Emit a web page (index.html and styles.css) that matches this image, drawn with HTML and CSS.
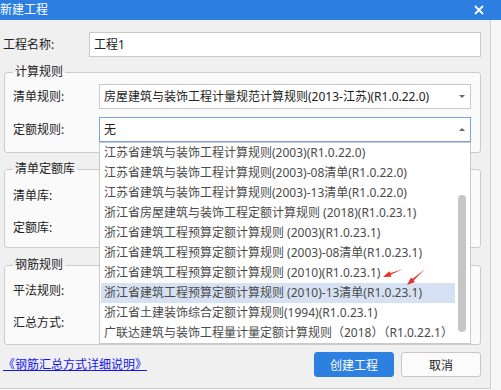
FILE: index.html
```html
<!DOCTYPE html>
<html lang="zh-CN">
<head>
  <meta charset="UTF-8">
  <title>新建工程</title>
  <link rel="stylesheet" href="styles.css">
</head>
<body>
  <div class="titlebar">
    <span class="title">新建工程</span>
    <svg class="close" width="10" height="10" viewBox="0 0 10 10">
      <path d="M1 1 L9 9 M9 1 L1 9" stroke="#fff" stroke-width="1.8" fill="none"/>
    </svg>
  </div>

  <div class="dialog">
    <div class="name-row">
      <span class="label">工程名称:</span>
      <div class="input">工程1</div>
    </div>

    <fieldset class="group">
      <legend>计算规则</legend>
      <div class="row">
        <span class="label">清单规则:</span>
        <div class="select">房屋建筑与装饰工程计量规范计算规则(2013-江苏)(R1.0.22.0)<i class="caret"></i></div>
      </div>
      <div class="row">
        <span class="label">定额规则:</span>
        <div class="select focused">无<i class="caret up"></i></div>
      </div>
    </fieldset>

    <fieldset class="group">
      <legend>清单定额库</legend>
      <div class="row">
        <span class="label">清单库:</span>
        <div class="select"></div>
      </div>
      <div class="row">
        <span class="label">定额库:</span>
        <div class="select"></div>
      </div>
    </fieldset>

    <fieldset class="group">
      <legend>钢筋规则</legend>
      <div class="row">
        <span class="label">平法规则:</span>
        <div class="select"></div>
      </div>
      <div class="row">
        <span class="label">汇总方式:</span>
        <div class="select"></div>
      </div>
    </fieldset>

    <div class="footer">
      <a class="help-link" href="#">《钢筋汇总方式详细说明》</a>
      <div class="buttons">
        <button class="btn primary">创建工程</button>
        <button class="btn">取消</button>
      </div>
    </div>
  </div>

  <!-- open list of 定额规则 -->
  <div class="dropdown">
    <ul class="items">
      <li>江苏省建筑与装饰工程计算规则(2003)(R1.0.22.0)</li>
      <li>江苏省建筑与装饰工程计算规则(2003)-08清单(R1.0.22.0)</li>
      <li>江苏省建筑与装饰工程计算规则(2003)-13清单(R1.0.22.0)</li>
      <li>浙江省房屋建筑与装饰工程定额计算规则 (2018)(R1.0.23.1)</li>
      <li>浙江省建筑工程预算定额计算规则 (2003)(R1.0.23.1)</li>
      <li>浙江省建筑工程预算定额计算规则 (2003)-08清单(R1.0.23.1)</li>
      <li>浙江省建筑工程预算定额计算规则 (2010)(R1.0.23.1)</li>
      <li class="selected">浙江省建筑工程预算定额计算规则 (2010)-13清单(R1.0.23.1)</li>
      <li>浙江省土建装饰综合定额计算规则(1994)(R1.0.23.1)</li>
      <li>广联达建筑与装饰工程量计量定额计算规则（2018）（R1.0.22.1）</li>
    </ul>
    <div class="scrollbar"><div class="thumb"></div></div>
  </div>

  <svg class="marks" width="501" height="390" viewBox="0 0 501 390">
    <polygon fill="#e9312b" points="403,269 390.7,274.8 391.5,276.8 383,277 389.3,271.2 390.1,273.2"/>
    <polygon fill="#e9312b" points="425,269 413.6,280.4 415,281.9 407,285 411,277.5 412.4,279"/>
  </svg>
</body>
</html>
```

FILE: styles.css
```css
body {
  margin: 0;
  width: 501px;
  height: 390px;
  position: relative;
  overflow: hidden;
  background: #f7f7f7;
  font-family: "Noto Sans", "Noto Sans CJK SC", sans-serif;
  font-size: 12px;
  color: #222;
}

.titlebar {
  height: 20px;
  background: #2c7fe0;
  color: #fff;
  display: flex;
  align-items: center;
  justify-content: space-between;
  padding-right: 17px;
  line-height: 20px;
  font-size: 12px;
}

.title {
  margin-left: 0;
}

.dialog {
  box-sizing: border-box;
  width: 491px;
  height: 369px;
  background: #f0f0f0;
  border-right: 1px solid #cfcfcf;
  border-bottom: 1px solid #cfcfcf;
  padding: 12px 9px 0 3px;
}

.name-row,
.row {
  display: flex;
  align-items: center;
  height: 25px;
}

.label {
  width: 86px;
  flex: none;
  line-height: 16px;
}

.input,
.select {
  position: relative;
  box-sizing: border-box;
  flex: 1;
  height: 25px;
  background: #fff;
  border: 1px solid #c9c9c9;
  padding-left: 4px;
  line-height: 23px;
  white-space: nowrap;
}

.select.focused {
  border-color: #7aa3de;
}

.caret {
  position: absolute;
  right: 5px;
  top: 10px;
  width: 0;
  height: 0;
  border-left: 3px solid transparent;
  border-right: 3px solid transparent;
  border-top: 3px solid #666;
}

.caret.up {
  border-top: none;
  border-bottom: 3px solid #666;
}

.group {
  margin: 7px 0 0 1px;
  padding: 4px 9px 10px 8px;
  border: 1px solid #cbcbcb;
  border-radius: 3px;
  background: #fafafa;
}

.group + .group {
  margin-top: 8px;
  padding: 6px 9px 7px 8px;
}

.group + .group + .group {
  margin-top: 9px;
  padding: 5px 9px 9px 8px;
}

.group legend {
  padding: 0 2px;
  line-height: 16px;
}

.group .row + .row {
  margin-top: 8px;
}

.group + .group .row + .row {
  margin-top: 7px;
}

.footer {
  margin-top: 7px;
  display: flex;
  align-items: center;
  justify-content: space-between;
}

.help-link {
  color: #1515f0;
  text-decoration: underline;
  line-height: 16px;
}

.buttons {
  display: flex;
  gap: 7px;
}

.btn {
  width: 80px;
  height: 25px;
  border: 1px solid #c6c6c6;
  border-radius: 3px;
  background: #fbfbfb;
  font-family: inherit;
  font-size: 12px;
  color: #222;
  padding: 0;
}

.btn.primary {
  background: #2e80e0;
  border-color: #2e80e0;
  color: #fff;
}

.dropdown {
  position: absolute;
  top: 142px;
  left: 99px;
  box-sizing: border-box;
  width: 372px;
  height: 202px;
  background: #fff;
  border: 1px solid #c9c9c9;
  display: flex;
}

.items {
  list-style: none;
  margin: 0 0 0 1px;
  padding: 0;
  width: 354px;
}

.items li {
  height: 20px;
  line-height: 20px;
  padding-left: 3px;
  color: #4a4a4a;
  white-space: nowrap;
}

.items li.selected {
  background: #d6e2f3;
}

.scrollbar {
  flex: 1;
  padding: 52px 0 0 3px;
}

.thumb {
  width: 8px;
  height: 137px;
  border-radius: 4px;
  background: #c6c6c6;
}

.marks {
  position: absolute;
  top: 0;
  left: 0;
  pointer-events: none;
}
```
